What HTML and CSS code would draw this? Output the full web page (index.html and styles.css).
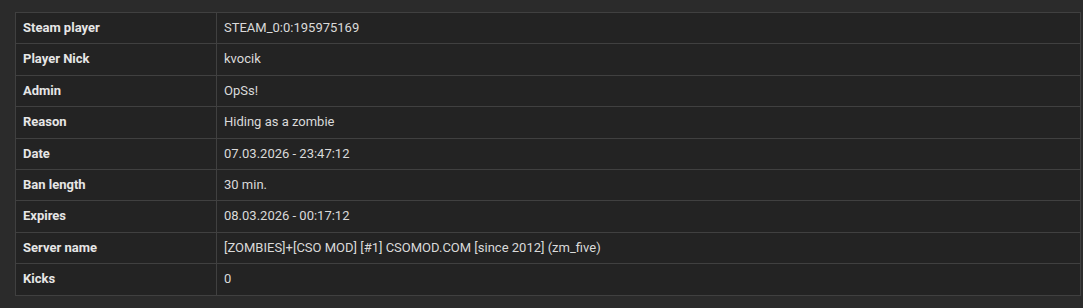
FILE: index.html
```html
<!DOCTYPE html>
<html>
<head>
<meta charset="utf-8">
<link rel="stylesheet" href="styles.css">
</head>
<body>
<table class="info">
<tbody>
<tr><th>Steam player</th><td>STEAM_0:0:195975169</td></tr>
<tr><th>Player Nick</th><td>kvocik</td></tr>
<tr><th>Admin</th><td>OpSs!</td></tr>
<tr><th>Reason</th><td>Hiding as a zombie</td></tr>
<tr><th>Date</th><td>07.03.2026 - 23:47:12</td></tr>
<tr><th>Ban length</th><td>30 min.</td></tr>
<tr><th>Expires</th><td>08.03.2026 - 00:17:12</td></tr>
<tr><th>Server name</th><td>[ZOMBIES]+[CSO MOD] [#1] CSOMOD.COM [since 2012] (zm_five)</td></tr>
<tr><th>Kicks</th><td>0</td></tr>
</tbody>
</table>
</body>
</html>
```
FILE: styles.css
```css
html, body {
  background: #2b2b2b;
}
body {
  margin: 12px 2px 0 15px;
  font-family: Roboto, "Liberation Sans", sans-serif;
  font-size: 13px;
  color: #dcdcdc;
}
.info {
  width: 100%;
  border-collapse: collapse;
  background: #232323;
  border: 1px solid #404040;
}
.info th, .info td {
  border: 1px solid #404040;
  padding: 6px 7px;
  line-height: 18.4px;
  text-align: left;
  vertical-align: middle;
}
.info th {
  width: 186px;
  font-weight: bold;
  color: #e6e6e6;
}
.info td {
  font-weight: normal;
  color: #dadada;
}
```
